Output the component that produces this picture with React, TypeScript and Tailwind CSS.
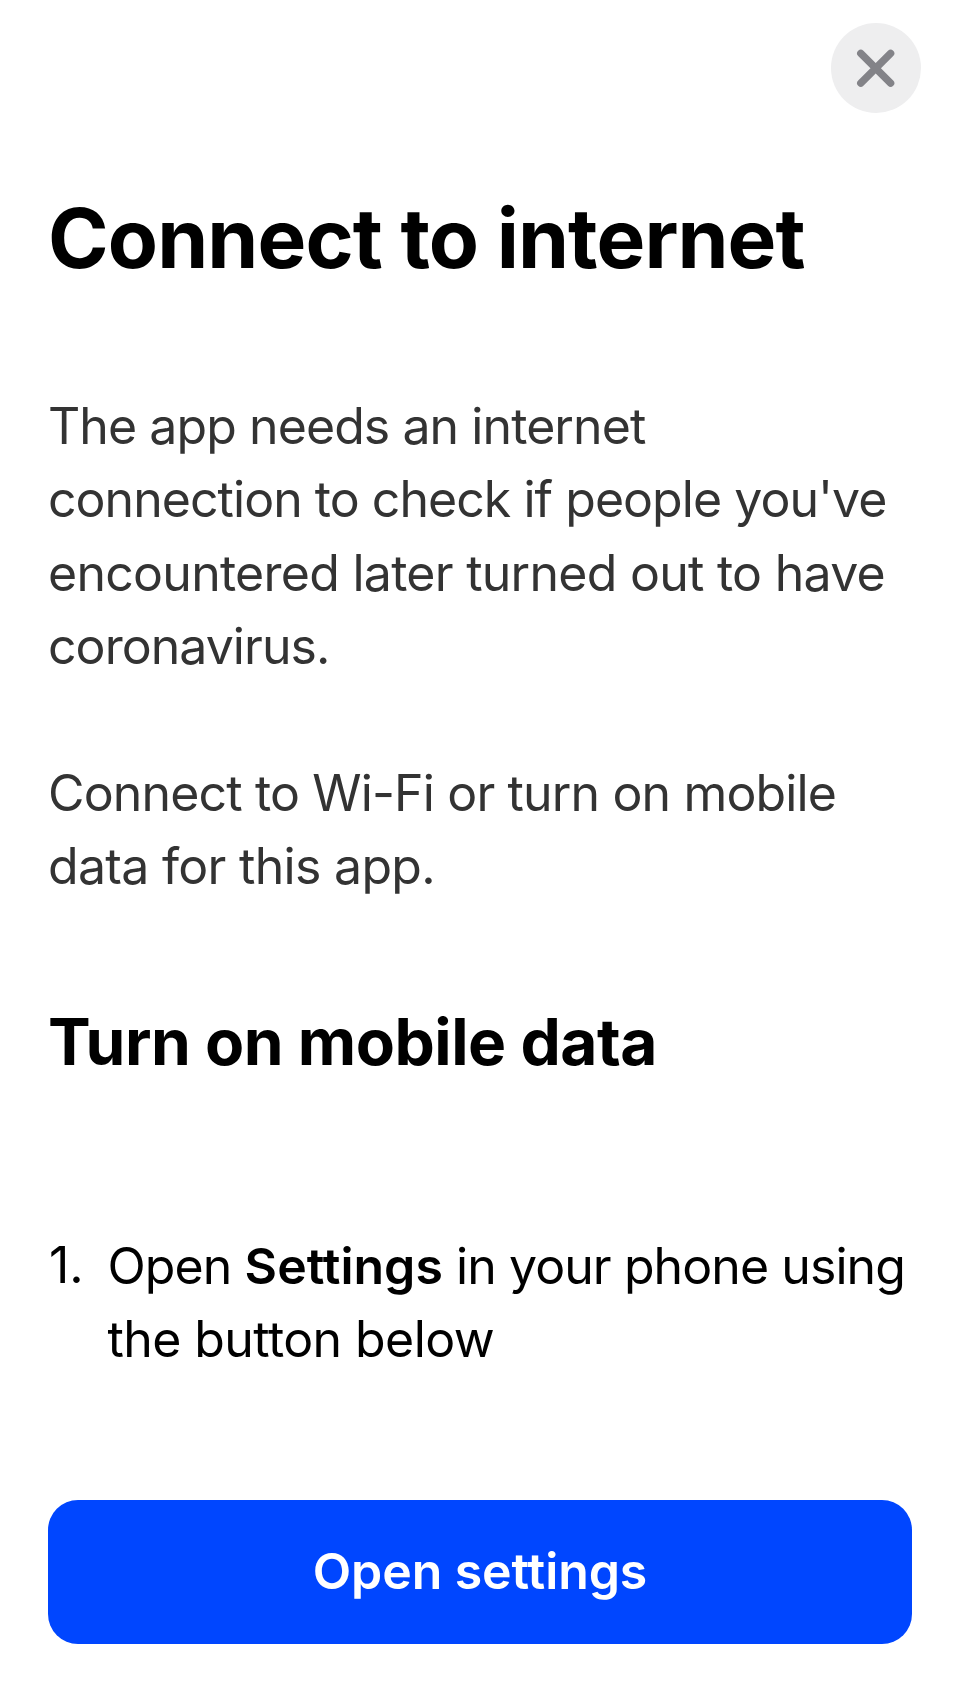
export default function App() {
  return (
    <main className="flex h-[1704px] w-[960px] flex-col bg-white font-['Inter','Liberation_Sans',sans-serif] text-black">
      <header className="flex justify-end pt-[23px] pr-[39px]">
        <button aria-label="Close" className="flex size-[90px] items-center justify-center rounded-full bg-[#eeeeef]">
          <svg width="40" height="40" viewBox="0 0 40 40" fill="none" stroke="#838388" strokeWidth="7.4" strokeLinecap="round"><path d="M4.8 5.4L34.6 35.2M34.6 5.4L4.8 35.2" /></svg>
        </button>
      </header>
      <h1 className="mt-[76px] ml-[48px] h-[100px] text-[82px] leading-[100px] font-bold tracking-[-0.9px] whitespace-nowrap">Connect to internet</h1>
      <div className="mt-[101px] ml-[48px] text-[50px] leading-[73.4px] whitespace-nowrap text-[#333333]">
        <p>
          <span className="tracking-[-0.92px]">The app needs an internet</span><br />
          <span className="tracking-[-0.96px]">connection to check if people you've</span><br />
          <span className="tracking-[-0.73px]">encountered later turned out to have</span><br />
          <span className="tracking-[-0.95px]">coronavirus.</span>
        </p>
        <p className="mt-[73.4px]">
          <span className="tracking-[-0.85px]">Connect to Wi-Fi or turn on mobile</span><br />
          <span className="tracking-[-0.7px]">data for this app.</span>
        </p>
      </div>
      <h2 className="mt-[98px] ml-[48px] h-[80px] text-[64px] leading-[80px] font-bold tracking-[-0.48px] whitespace-nowrap">Turn on mobile data</h2>
      <div className="mt-[148px] ml-[48px] flex text-[50px] leading-[73.4px] whitespace-nowrap">
        <span className="-mt-px w-[59.5px] pl-px">1.</span>
        <p>
          <span className="tracking-[-0.9px]">Open </span><b className="font-semibold">Settings</b><span className="tracking-[-0.92px]"> in your phone using</span><br />
          <span className="tracking-[-0.58px]">the button below</span>
        </p>
      </div>
      <button className="mt-auto mb-[60px] ml-[48px] h-[144px] w-[864px] rounded-[30px] bg-[#0046ff] pb-px text-[50px] font-semibold tracking-[-0.08px] text-white">Open settings</button>
    </main>
  );
}
